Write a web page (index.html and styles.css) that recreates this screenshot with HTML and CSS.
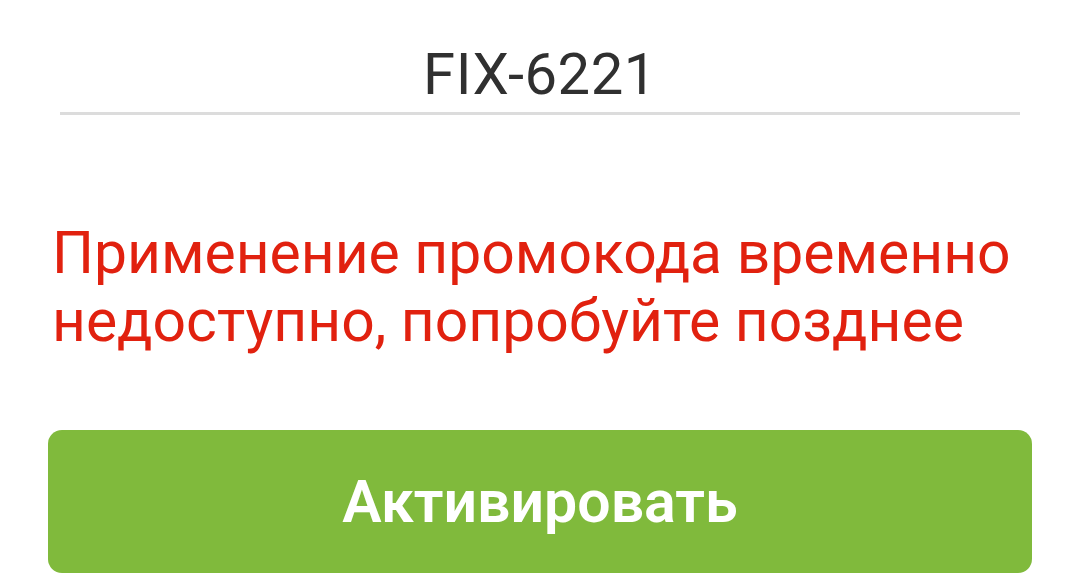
FILE: index.html
```html
<!DOCTYPE html>
<html lang="ru">
<head>
<meta charset="utf-8">
<link rel="stylesheet" href="styles.css">
</head>
<body>
<div class="page">
  <div class="field">
    <div class="code">FIX-6221</div>
  </div>
  <p class="error">Применение промокода временно недоступно, попробуйте позднее</p>
  <button class="activate">Активировать</button>
</div>
</body>
</html>
```
FILE: styles.css
```css
html, body {
  margin: 0;
  padding: 0;
  background: #ffffff;
}
.page {
  width: 1070px;
  height: 582px;
  overflow: hidden;
  font-family: Roboto, "Noto Sans", sans-serif;
  display: flex;
  flex-direction: column;
}
.field {
  margin: 0 50px 0 60px;
  padding-top: 36px;
  border-bottom: 3px solid #dcdcdc;
}
.code {
  text-align: center;
  font-size: 58px;
  line-height: 76px;
  color: #303030;
  letter-spacing: 0.5px;
}
.error {
  margin: 104px 30px 0 52px;
  font-size: 58.8px;
  line-height: 68px;
  color: #e1210f;
}
.activate {
  margin: 75px 38px 0 48px;
  height: 143px;
  flex-shrink: 0;
  border: none;
  border-radius: 14px;
  background: #80ba3c;
  color: #ffffff;
  font-family: Roboto, "Noto Sans", sans-serif;
  font-size: 59px;
  font-weight: 600;
  padding: 0;
}
```
